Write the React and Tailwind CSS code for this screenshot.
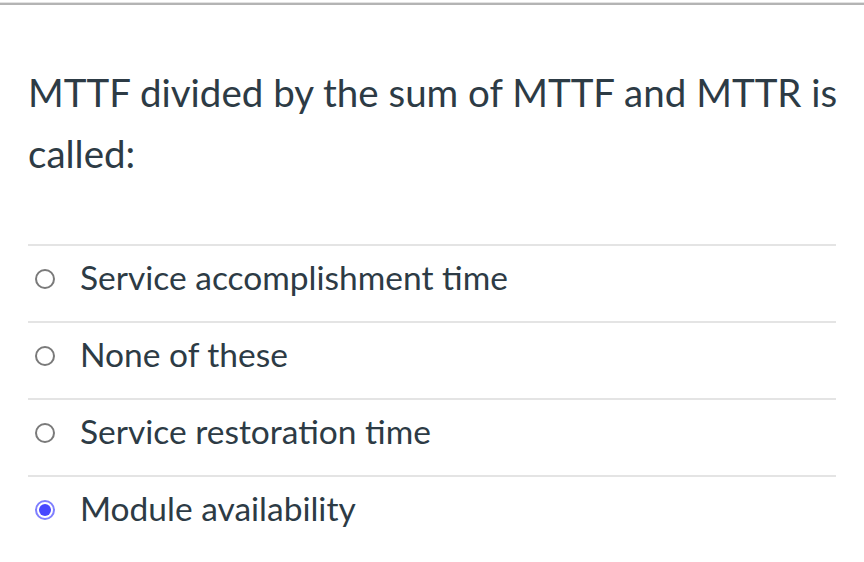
import React from "react";

function Radio({ checked }) {
  if (checked) {
    return (
      <span className="flex h-[20px] w-[20px] shrink-0 items-center justify-center rounded-full border-[2px] border-[#7f7fff] bg-white">
        <span className="h-[12px] w-[12px] rounded-full bg-[#4747ff]" />
      </span>
    );
  }
  return (
    <span className="h-[20px] w-[20px] shrink-0 rounded-full border-[2px] border-[#7a7a7a] bg-white" />
  );
}

const options = [
  { label: "Service accomplishment time", checked: false },
  { label: "None of these", checked: false },
  { label: "Service restoration time", checked: false },
  { label: "Module availability", checked: true },
];

export default function App() {
  return (
    <div
      className="h-[562px] w-[864px] overflow-hidden bg-white text-[#2d3b45]"
      style={{ fontFamily: "Lato, 'Open Sans', sans-serif" }}
    >
      <div className="mt-[2px] h-[1px] w-full bg-[#e2e2e2]" />
      <div className="h-[2px] w-full bg-[#b4b4b4]" />
      <div className="pl-[28px] pr-[28px]">
        <p className="mt-[57px] whitespace-nowrap text-[38.5px] leading-[61px]">
          MTTF divided by the sum of MTTF and MTTR is
          <br />
          called:
        </p>
        <div className="mt-[60px]">
          {options.map((o) => (
            <div
              key={o.label}
              className="flex h-[77px] items-center border-t-[2px] border-[#e4e4e4] pb-[9px] pl-[7px]"
            >
              <Radio checked={o.checked} />
              <span className="mb-[3px] ml-[25px] text-[33.5px] leading-none">
                {o.label}
              </span>
            </div>
          ))}
        </div>
      </div>
    </div>
  );
}
